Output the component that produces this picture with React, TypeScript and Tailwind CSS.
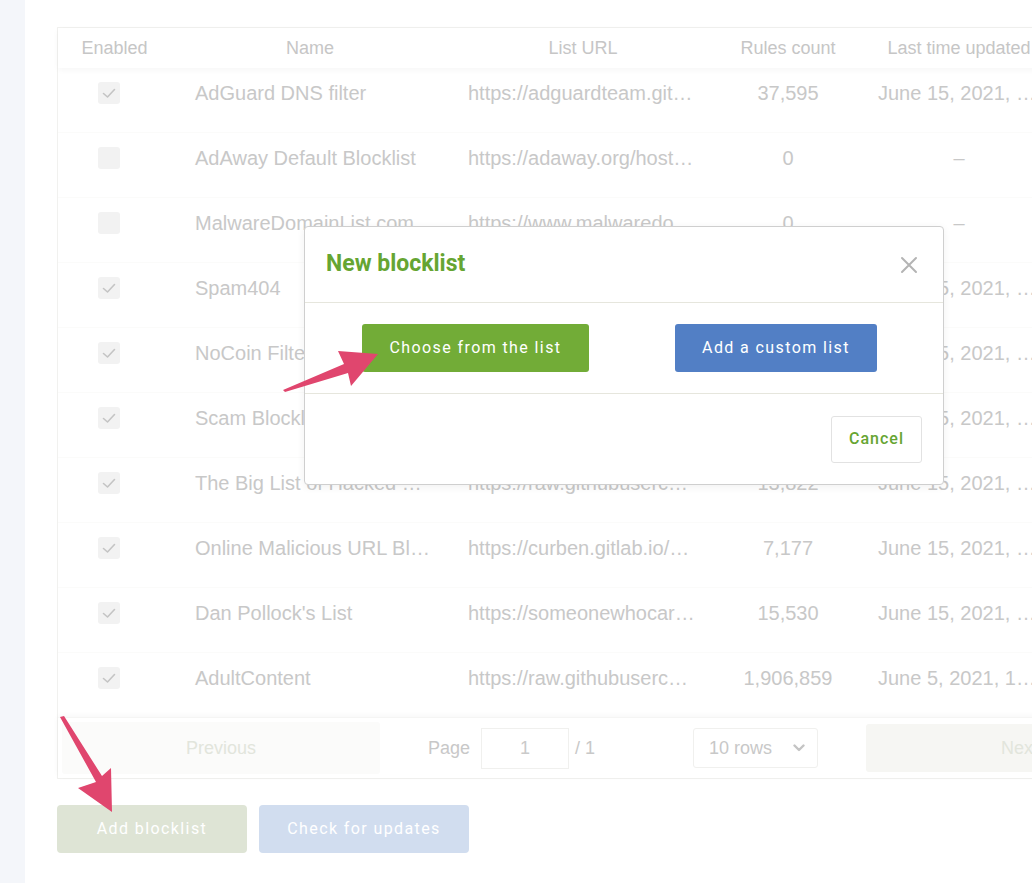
import React from 'react';

type Row = { on: boolean; name: string; url: string; rules: string; updated: string };

const rows: Row[] = [
  { on: true, name: 'AdGuard DNS filter', url: 'https://adguardteam.github.io/AdGuardSDNSFilter/Filters/filter.txt', rules: '37,595', updated: 'June 15, 2021, 10:42' },
  { on: false, name: 'AdAway Default Blocklist', url: 'https://adaway.org/hosts.txt', rules: '0', updated: '–' },
  { on: false, name: 'MalwareDomainList.com Hosts List', url: 'https://www.malwaredomainlist.com/hostslist/hosts.txt', rules: '0', updated: '–' },
  { on: true, name: 'Spam404', url: 'https://raw.githubusercontent.com/Spam404/lists/master/main-blacklist.txt', rules: '8,139', updated: 'June 15, 2021, 10:42' },
  { on: true, name: 'NoCoin Filter List', url: 'https://raw.githubusercontent.com/hoshsadiq/adblock-nocoin-list/master/hosts.txt', rules: '228', updated: 'June 15, 2021, 10:42' },
  { on: true, name: 'Scam Blocklist by DurableNapkin', url: 'https://raw.githubusercontent.com/durablenapkin/scamblocklist/master/adguard.txt', rules: '2,110', updated: 'June 15, 2021, 10:42' },
  { on: true, name: 'The Big List of Hacked Malware Web Sites', url: 'https://raw.githubusercontent.com/mitchellkrogza/The-Big-List-of-Hacked-Malware-Web-Sites/master/hosts', rules: '13,822', updated: 'June 15, 2021, 10:42' },
  { on: true, name: 'Online Malicious URL Blocklist', url: 'https://curben.gitlab.io/malware-filter/urlhaus-filter-agh-online.txt', rules: '7,177', updated: 'June 15, 2021, 10:42' },
  { on: true, name: "Dan Pollock's List", url: 'https://someonewhocares.org/hosts/zero/hosts', rules: '15,530', updated: 'June 15, 2021, 10:42' },
  { on: true, name: 'AdultContent', url: 'https://raw.githubusercontent.com/chadmayfield/my-pihole-blocklists/master/lists/pi_blocklist_porn_top1m.list', rules: '1,906,859', updated: 'June 5, 2021, 14:10' },
];

function Check({ on }: { on: boolean }) {
  return (
    <div className="flex h-[22px] w-[22px] items-center justify-center rounded-[3px] bg-[#f2f2f2]">
      {on && (
        <svg width="14" height="11" viewBox="0 0 14 11" fill="none">
          <path d="M1.5 5.5 L5.5 9 L12.5 1.5" stroke="#c4c4c4" strokeWidth="1.6" strokeLinecap="round" strokeLinejoin="round" />
        </svg>
      )}
    </div>
  );
}

export default function App() {
  return (
    <div className="relative flex h-[883px] w-[1032px] overflow-hidden bg-white font-['Liberation_Sans',Arial,sans-serif]">
      {/* sidebar edge */}
      <div className="w-[25px] shrink-0 bg-[#f4f6fa]" />

      <div className="ml-[32px] flex shrink-0 flex-col pt-[27px]">
        {/* table card */}
        <div className="flex w-[1010px] flex-col border border-[#f1f1ef]">
          <div className="flex h-[40px] items-center text-[18px] text-[#c6c6c6] shadow-[0_2px_6px_rgba(0,0,0,0.04)]">
            <div className="w-[113px] text-center">Enabled</div>
            <div className="w-[278px] text-center">Name</div>
            <div className="w-[268px] text-center">List URL</div>
            <div className="w-[142px] text-center">Rules count</div>
            <div className="w-[200px] text-center">Last time updated</div>
          </div>

          {rows.map((r, i) => (
            <div key={i} className="flex h-[65px] items-start border-b border-[#fbfbfa] pt-[14px] text-[20px] leading-[22px] text-[#c8c8c8]">
              <div className="flex w-[113px] pl-[40px]">
                <Check on={r.on} />
              </div>
              <div className="w-[278px] truncate pl-[24px] pr-[14px]">{r.name}</div>
              <div className="w-[268px] truncate pl-[19px] pr-[20px]">{r.url}</div>
              <div className="w-[142px] truncate text-center">{r.rules}</div>
              <div className="w-[200px] truncate px-[19px] text-center">{r.updated}</div>
            </div>
          ))}

          {/* pagination */}
          <div className="flex h-[60px] items-center px-[4px] text-[18px] shadow-[0_-2px_6px_rgba(0,0,0,0.04)]">
            <div className="flex h-[52px] w-[318px] items-center justify-center rounded-[3px] bg-[#fbfbfa] text-[#e2e5dc]">Previous</div>
            <div className="flex w-[486px] items-center justify-center gap-[6px] text-[#c8c8c8]">
              <span className="mr-[5px]">Page</span>
              <div className="flex h-[41px] w-[88px] items-center justify-center border border-[#f0f0ee] text-[#cacaca]">1</div>
              <span>/ 1</span>
              <div className="ml-[92px] flex h-[40px] w-[125px] items-center justify-between rounded-[3px] border border-[#f0f0ee] pl-[15px] pr-[12px]">
                <span>10 rows</span>
                <svg width="12" height="8" viewBox="0 0 12 8" fill="none">
                  <path d="M1.5 1.5 L6 6 L10.5 1.5" stroke="#c4c4c4" strokeWidth="2.4" strokeLinecap="round" strokeLinejoin="round" />
                </svg>
              </div>
            </div>
            <div className="flex h-[48px] w-[190px] items-center justify-end rounded-[3px] bg-[#f6f6f3] pr-[18px] text-[#e2e5dc]">Next</div>
          </div>
        </div>

        {/* bottom buttons */}
        <div className="mt-[26px] flex gap-[12px] font-['Roboto',sans-serif] text-[16px] tracking-[1.4px] text-white">
          <div className="flex h-[48px] w-[190px] items-center justify-center rounded-[4px] bg-[#dee4d5]">Add blocklist</div>
          <div className="flex h-[48px] w-[210px] items-center justify-center rounded-[4px] bg-[#d1ddef]">Check for updates</div>
        </div>
      </div>

      {/* modal */}
      <div className="absolute left-[304px] top-[226px] flex h-[259px] w-[640px] flex-col rounded-[4px] border border-[#cfcfcf] bg-white font-['Roboto',sans-serif] shadow-[0_2px_8px_rgba(0,0,0,0.06)]">
        <div className="flex h-[76px] items-center justify-between border-b border-[#e6e6dd] pl-[21px] pr-[25px]">
          <span className="text-[23px] font-bold text-[#66a532]">New blocklist</span>
          <svg width="18" height="18" viewBox="0 0 18 18" fill="none">
            <path d="M2 2 L16 16 M16 2 L2 16" stroke="#b4b4b4" strokeWidth="2" strokeLinecap="round" />
          </svg>
        </div>
        <div className="flex h-[91px] items-center gap-[86px] border-b border-[#e6e6dd] pl-[57px] text-[16px] tracking-[1.4px] text-white">
          <div className="flex h-[48px] w-[227px] items-center justify-center rounded-[3px] bg-[#72ac37]">Choose from the list</div>
          <div className="flex h-[48px] w-[202px] items-center justify-center rounded-[3px] bg-[#527fc5]">Add a custom list</div>
        </div>
        <div className="flex flex-1 items-center justify-end pr-[21px]">
          <div className="flex h-[47px] w-[91px] items-center justify-center rounded-[3px] border border-[#e2e2e2] text-[16px] font-medium tracking-[1px] text-[#66a532]">Cancel</div>
        </div>
      </div>

      {/* annotation arrows */}
      <svg className="pointer-events-none absolute left-0 top-0" width="1032" height="883" viewBox="0 0 1032 883">
        <polygon points="283,390 344,364 338,351 378,354 351,386 348,373 285,392" fill="#e0466e" />
        <polygon points="60,717 64,716 102,776 111,768 112,812 78,788 96,782" fill="#e0466e" />
      </svg>
    </div>
  );
}
